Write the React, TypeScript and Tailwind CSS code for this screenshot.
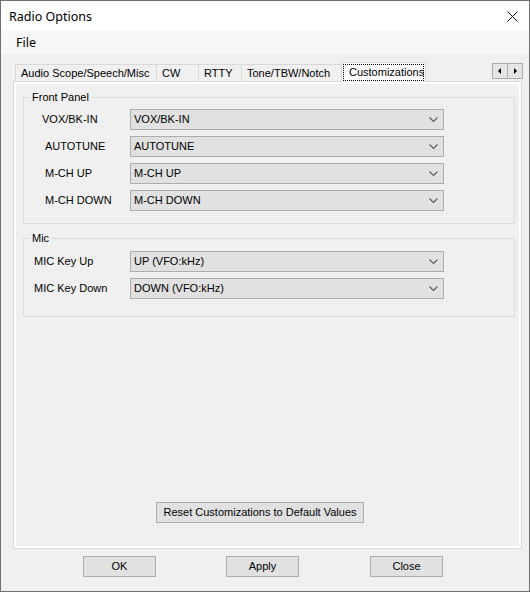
import React from "react"

const frontPanel = [
  { label: "VOX/BK-IN", value: "VOX/BK-IN", pad: "pl-[18px]" },
  { label: "AUTOTUNE", value: "AUTOTUNE", pad: "pl-[21px]" },
  { label: "M-CH UP", value: "M-CH UP", pad: "pl-[21px]" },
  { label: "M-CH DOWN", value: "M-CH DOWN", pad: "pl-[21px]" },
]

const mic = [
  { label: "MIC Key Up", value: "UP (VFO:kHz)", pad: "pl-[10px]" },
  { label: "MIC Key Down", value: "DOWN (VFO:kHz)", pad: "pl-[10px]" },
]

const tabs = [
  { name: "Audio Scope/Speech/Misc", w: "w-[142px]" },
  { name: "CW", w: "w-[43px]" },
  { name: "RTTY", w: "w-[44px]" },
  { name: "Tone/TBW/Notch", w: "w-[101px]" },
]

function Combo({ value }: { value: string }) {
  return (
    <div className="flex items-center w-[314px] h-[21px] border border-[#adadad] bg-[#e1e1e1] pl-[3px] pr-[4px]">
      <span className="flex-1 leading-none">{value}</span>
      <svg width="9" height="6" viewBox="0 0 9 6" className="mr-[1px]">
        <path d="M0.5 0.5 L4.5 4.5 L8.5 0.5" fill="none" stroke="#5a5a5a" strokeWidth="1.1" />
      </svg>
    </div>
  )
}

function Group({ title, rows, rowsClass }: { title: string; rows: typeof frontPanel; rowsClass: string }) {
  return (
    <fieldset className={`border border-[#dcdcdc] mx-0 ${rowsClass}`}>
      <legend className="ml-[6px] px-[2px] leading-[13px]">{title}</legend>
      <div className="flex flex-col gap-[6px]">
        {rows.map((row) => (
          <div key={row.label} className="flex items-center">
            <div className={`w-[106px] ${row.pad}`}>{row.label}</div>
            <Combo value={row.value} />
          </div>
        ))}
      </div>
    </fieldset>
  )
}

function Button({ label, w }: { label: string; w: string }) {
  return (
    <button className={`${w} h-[21px] border border-[#adadad] bg-[#e1e1e1] leading-none`}>{label}</button>
  )
}

export default function App() {
  return (
    <div className="w-[530px] h-[592px] flex flex-col border border-[#6f6f6f] bg-[#f0f0f0] text-[11px] text-black font-['Liberation_Sans',Arial,sans-serif]">
      {/* Title bar */}
      <div className="h-[30px] bg-white flex items-center pl-[8px] pr-[11px] pt-[3px] shrink-0">
        <span className="flex-1 text-[12.5px] font-['Noto_Sans',sans-serif]">Radio Options</span>
        <svg width="11" height="11" viewBox="0 0 11 11" className="mb-[2px]">
          <path d="M0.5 0.5 L10.5 10.5 M10.5 0.5 L0.5 10.5" stroke="#111" strokeWidth="1" />
        </svg>
      </div>

      {/* Menu bar */}
      <div className="h-[23px] bg-[#f7f7f7] flex items-center pl-[15px] pt-[2px] shrink-0">
        <span className="text-[12.5px] font-['Noto_Sans',sans-serif]">File</span>
      </div>

      {/* Body */}
      <div className="flex-1 flex flex-col pl-[12px] pr-[7px] pt-[8px] pb-[14px]">
        {/* Tab strip */}
        <div className="flex items-end h-[19px] pl-[2px] relative z-10">
          {tabs.map((t) => (
            <div
              key={t.name}
              className={`${t.w} h-[17px] -mr-px border border-b-0 border-[#d9d9d9] bg-[#f0f0f0] pl-[5px] flex items-center`}
            >
              {t.name}
            </div>
          ))}
          <div className="w-[85px] h-[20px] -mb-px border border-b-0 border-[#d9d9d9] bg-white flex items-start pl-px pt-px">
            <span className="w-[81px] h-[17px] border border-dotted border-black flex items-center pl-[5px]">
              Customizations
            </span>
          </div>
          <div className="ml-auto mr-[-1px] mb-[2px] flex self-center">
            <div className="w-[16px] h-[16px] border border-[#adadad] bg-[#e5e5e5] flex items-center justify-center">
              <svg width="4" height="6" viewBox="0 0 4 6"><path d="M3 0 L0 3 L3 6 Z" fill="#000" /></svg>
            </div>
            <div className="w-[16px] h-[16px] -ml-px border border-[#adadad] bg-[#e5e5e5] flex items-center justify-center">
              <svg width="4" height="6" viewBox="0 0 4 6"><path d="M1 0 L4 3 L1 6 Z" fill="#000" /></svg>
            </div>
          </div>
        </div>

        {/* Tab page */}
        <div className="flex-1 flex flex-col border border-[#d9d9d9] shadow-[inset_2px_2px_0_#fff,inset_-2px_-2px_0_#fff] pl-[9px] pr-[6px] pt-[9px] pb-[25px]">
          <Group title="Front Panel" rows={frontPanel} rowsClass="pt-[5px] pb-[12px]" />
          <div className="h-[8px]" />
          <Group title="Mic" rows={mic} rowsClass="pt-[6px] pb-[17px]" />
          <div className="mt-auto pl-[133px]">
            <Button label="Reset Customizations to Default Values" w="w-[208px]" />
          </div>
        </div>

        {/* Bottom buttons */}
        <div className="flex pt-[7px] pl-[70px]">
          <Button label="OK" w="w-[73px]" />
          <div className="w-[70px]" />
          <Button label="Apply" w="w-[73px]" />
          <div className="w-[71px]" />
          <Button label="Close" w="w-[73px]" />
        </div>
      </div>
    </div>
  )
}
